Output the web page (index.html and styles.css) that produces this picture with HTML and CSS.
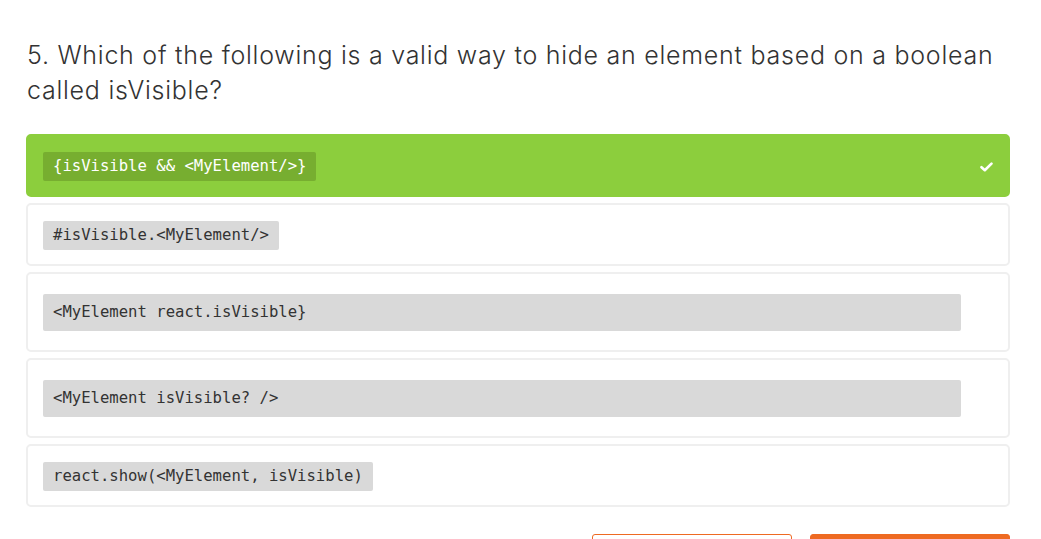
FILE: index.html
```html
<!DOCTYPE html>
<html lang="en">
<head>
<meta charset="utf-8">
<title>Quiz question</title>
<link rel="stylesheet" href="styles.css">
</head>
<body>
<main class="quiz">
  <h2 class="question">5. Which of the following is a valid way to hide an element based on a boolean called isVisible?</h2>
  <ul class="options">
    <li class="option correct">
      <div class="answer"><code class="inline">{isVisible &amp;&amp; &lt;MyElement/&gt;}</code></div>
      <span class="check">
        <svg width="13" height="10" viewBox="0 0 13 10" aria-hidden="true"><path d="M1.5 5.2 L4.8 8.2 L11.5 1.6" fill="none" stroke="#fff" stroke-width="2.6" stroke-linecap="round" stroke-linejoin="round"/></svg>
      </span>
    </li>
    <li class="option">
      <div class="answer"><code class="inline">#isVisible.&lt;MyElement/&gt;</code></div>
      <span class="check"></span>
    </li>
    <li class="option">
      <div class="answer"><pre class="block">&lt;MyElement react.isVisible}</pre></div>
      <span class="check"></span>
    </li>
    <li class="option">
      <div class="answer"><pre class="block">&lt;MyElement isVisible? /&gt;</pre></div>
      <span class="check"></span>
    </li>
    <li class="option">
      <div class="answer"><code class="inline">react.show(&lt;MyElement, isVisible)</code></div>
      <span class="check"></span>
    </li>
  </ul>
  <div class="actions">
    <button class="btn btn-outline" type="button" aria-label="Skip question"></button>
    <button class="btn btn-primary" type="button" aria-label="Submit answer"></button>
  </div>
</main>
</body>
</html>
```

FILE: styles.css
```css
html, body {
  margin: 0;
  padding: 0;
  background: #ffffff;
}

.quiz {
  width: 984px;
  padding: 0 0 40px 26px;
  font-family: Inter, "Noto Sans", sans-serif;
  color: #333333;
}

.question {
  margin: 0;
  padding: 38px 0 0 1px;
  font-size: 25px;
  font-weight: 350;
  line-height: 35px;
  letter-spacing: 0.74px;
  color: #333333;
}

.options {
  list-style: none;
  margin: 26px 0 0;
  padding: 0;
  display: flex;
  flex-direction: column;
  gap: 6px;
}

.option {
  display: flex;
  align-items: center;
  border: 2px solid #efefef;
  border-radius: 5px;
  padding: 16px 0 14px 15px;
  background: #ffffff;
}

.option.correct {
  background: #8cce3d;
  border-color: #8cce3d;
}

.answer {
  flex: 1;
  min-width: 0;
  line-height: 0;
}

.check {
  width: 47px;
  flex: none;
  display: flex;
  justify-content: center;
  padding-left: 3px;
  box-sizing: border-box;
}

.inline,
.block {
  font-family: "DejaVu Sans Mono", "Liberation Mono", monospace;
  font-size: 15.6px;
  line-height: 19px;
  color: #333333;
  background: #d9d9d9;
  border-radius: 2px;
}

.inline {
  display: inline-block;
  padding: 5px 10px;
  vertical-align: top;
}

.block {
  display: block;
  margin: 4px 0 5px;
  padding: 9px 10px;
  white-space: pre;
}

.correct .inline {
  background: #77ae30;
  color: #ffffff;
}

.actions {
  display: flex;
  justify-content: flex-end;
  gap: 18px;
  margin-top: 27px;
}

.btn {
  width: 200px;
  height: 42px;
  border-radius: 3px;
  cursor: pointer;
}

.btn-outline {
  background: #ffffff;
  border: 1px solid #ee6a22;
}

.btn-primary {
  background: #ee6a22;
  border: 1px solid #ee6a22;
}
```
